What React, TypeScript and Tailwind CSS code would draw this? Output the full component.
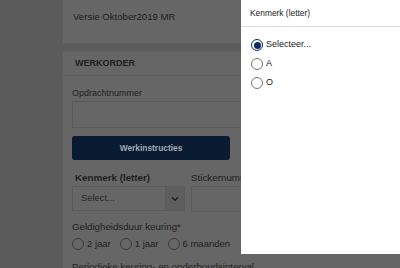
import { ChevronDown } from 'lucide-react';

const options = ['Selecteer...', 'A', 'O'];
const durations = ['2 jaar', '1 jaar', '6 maanden'];

function Radio({ checked, dim }: { checked?: boolean; dim?: boolean }) {
  if (dim) {
    return <span className="w-[12px] h-[12px] rounded-full border border-[#3c3c3c] shrink-0" />;
  }
  if (checked) {
    return (
      <span className="w-[12px] h-[12px] rounded-full border-[1.5px] border-[#0b2d5e] bg-white shrink-0 flex items-center justify-center">
        <span className="w-[7px] h-[7px] rounded-full bg-[#0b2d5e]" />
      </span>
    );
  }
  return <span className="w-[12px] h-[12px] rounded-full border border-[#767676] bg-white shrink-0" />;
}

export default function App() {
  return (
    <div className="relative w-[400px] h-[268px] overflow-hidden bg-[#5b5b5b] font-['Liberation_Sans',Arial,sans-serif] text-[#1f1f1f]">
      {/* dimmed page underneath */}
      <div className="pl-[62px] flex flex-col gap-[7px]">
        <div className="h-[44px] bg-[#666666] border-b border-l border-[#5f5f5f] pl-[10px] pt-[11px]">
          <p className="text-[9.6px] leading-[12px]">Versie Oktober2019 MR</p>
        </div>

        <div className="bg-[#666666] border-l border-t border-[#5f5f5f]">
          <div className="h-[24px] border-b border-[#5c5c5c] flex items-center pl-[12px]">
            <span className="text-[9px] font-bold">WERKORDER</span>
          </div>
          <div className="pl-[9px] pt-[11px] flex flex-col">
            <label className="text-[9px] leading-[12px]">Opdrachtnummer</label>
            <div className="mt-[2px] h-[27px] border border-[#5a5a5a]" />
            <button className="mt-[8px] w-[158px] h-[24px] rounded-[3px] bg-[#0a1a30] text-[8.4px] font-bold text-[#a3aab5]">
              Werkinstructies
            </button>

            <div className="mt-[12px] flex gap-[6px]">
              <div className="flex flex-col">
                <label className="pl-[3px] text-[9.8px] leading-[12px] font-bold">Kenmerk (letter)</label>
                <div className="mt-[2px] w-[113px] h-[25px] border border-[#5a5a5a] flex">
                  <span className="flex-1 pl-[8px] flex items-center text-[9.4px] text-[#262626]">Select...</span>
                  <span className="w-[19px] border-l border-[#5a5a5a] bg-[#5e5e5e] flex items-center justify-center">
                    <ChevronDown className="w-[10px] h-[10px] text-[#1f1f1f]" strokeWidth={3.5} />
                  </span>
                </div>
              </div>
              <div className="flex flex-col flex-1">
                <label className="text-[9.8px] leading-[12px] whitespace-nowrap">Stickernummer</label>
                <div className="mt-[2px] h-[26px] border border-[#5a5a5a]" />
              </div>
            </div>

            <label className="mt-[9px] text-[9.7px] leading-[12px]">Geldigheidsduur keuring*</label>
            <div className="mt-[4px] h-[14px] flex items-center gap-[9px]">
              {durations.map((d) => (
                <span key={d} className="flex items-center gap-[3px] text-[9.5px]">
                  <Radio dim />
                  {d}
                </span>
              ))}
            </div>
            <p className="mt-[10px] text-[9.7px] leading-[12px] whitespace-nowrap">
              Periodieke keuring- en onderhoudsinterval
            </p>
          </div>
        </div>
      </div>

      {/* modal */}
      <div className="absolute top-0 right-0 w-[159px] h-[254px] bg-white">
        <div className="h-[27px] border-b border-[#dcdcdc] flex items-center pl-[9px] pt-[1px]">
          <span className="text-[8.4px] text-[#222222]">Kenmerk (letter)</span>
        </div>
        <div className="pl-[10px] pt-[12px] flex flex-col gap-[7px]">
          {options.map((o, i) => (
            <label key={o} className="h-[12px] flex items-center gap-[3px] text-[9px] text-[#1a1a1a]">
              <Radio checked={i === 0} />
              {o}
            </label>
          ))}
        </div>
      </div>
    </div>
  );
}
